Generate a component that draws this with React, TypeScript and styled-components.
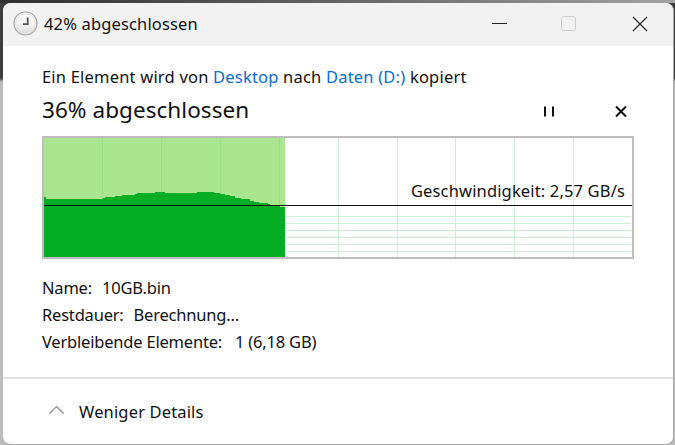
import React from 'react';
import styled, { createGlobalStyle } from 'styled-components';

const GlobalStyle = createGlobalStyle`
	html, body {
		margin: 0;
		padding: 0;
	}
	body {
		width: 675px;
		height: 445px;
		overflow: hidden;
		background:
			linear-gradient(90deg, #2e2e2e, #6a6a6a 55%, #a3a3a3) top / 100% 3px no-repeat,
			linear-gradient(180deg, #3d3d3d 0, #3d3d3d 78px, #bcbcbc 82px);
		font-family: "Noto Sans", "Open Sans", sans-serif;
		color: #111;
	}
`;

const Screen = styled.div`
	box-sizing: border-box;
	width: 675px;
	height: 445px;
	padding: 3px 1px 0 3px;
`;

const Win = styled.div`
	box-sizing: border-box;
	width: 671px;
	height: 442px;
	display: flex;
	flex-direction: column;
	background: #fff;
	border-radius: 8px;
	border-right: 1px solid #a6a6a6;
	border-bottom: 1px solid #a6a6a6;
	overflow: hidden;
`;

const TitleBar = styled.div`
	flex: 0 0 43px;
	box-sizing: border-box;
	display: flex;
	align-items: center;
	padding: 0 0 2px 10px;
	background: #f2f2f2;
`;

const TitleText = styled.div`
	flex: 1;
	margin-left: 6px;
	font-size: 16.5px;
	letter-spacing: 0.15px;
	line-height: 20px;
`;

const WinButtons = styled.div`
	display: flex;
	align-items: center;
	gap: 54px;
	margin-right: 25px;
`;

const Body = styled.div`
	flex: 1;
	display: flex;
	flex-direction: column;
	padding: 21px 39px 0;
`;

const CopyLine = styled.div`
	font-size: 16.5px;
	line-height: 20px;
	letter-spacing: 0.2px;
`;

const Link = styled.span`
	color: #0a6ed1;
`;

const ProgressRow = styled.div`
	display: flex;
	align-items: center;
	height: 30px;
	margin-top: 7px;
`;

const Percent = styled.div`
	flex: 1;
	font-size: 22.5px;
	letter-spacing: 0.05px;
`;

const ActionButtons = styled.div`
	display: flex;
	align-items: center;
	gap: 60px;
	margin: 4px 7px 0 0;
`;

const Chart = styled.div`
	position: relative;
	box-sizing: border-box;
	width: 592px;
	height: 123px;
	margin-top: 12px;
	border: 2px solid #bdbdbd;
	background: #fff;
`;

const Speed = styled.div`
	position: absolute;
	right: 7px;
	top: 43px;
	font-size: 16.5px;
	line-height: 20px;
	letter-spacing: 0.15px;
`;

const Info = styled.div`
	display: flex;
	flex-direction: column;
	margin-top: 15px;
`;

const InfoRow = styled.div<{ $gap?: number }>`
	display: flex;
	gap: ${(p) => p.$gap ?? 10}px;
	height: 27px;
	align-items: center;
	font-size: 16.5px;
	letter-spacing: -0.2px;
`;

const Divider = styled.div`
	flex: 0 0 2px;
	background: #e3e3e3;
`;

const Footer = styled.div`
	flex: 0 0 65px;
	display: flex;
	align-items: center;
	gap: 15px;
	padding-left: 46px;
	font-size: 16.5px;
	letter-spacing: 0.15px;
`;

const ChevronBox = styled.span`
	display: flex;
	margin-bottom: 5px;
`;

const CHART_W = 588;
const CHART_H = 119;
const FILL_W = 241;
const LINE_Y = 67;

// absolute x end of each step, and y of the top of the fill, in screen pixels
const steps: [number, number][] = [
	[46, 197], [103, 199], [105, 198], [115, 197], [122, 196], [135, 195], [137, 194],
	[155, 193], [165, 192], [197, 193], [214, 192], [220, 193], [225, 194], [230, 195],
	[235, 196], [241, 198], [250, 199], [254, 201], [259, 202], [268, 203], [270, 204],
	[280, 205], [285, 207],
];

const buildFill = () => {
	const pts: string[] = [`0,${CHART_H}`];
	let x = 0;
	steps.forEach(([endX, y]) => {
		const top = y - 138;
		pts.push(`${x},${top}`);
		x = endX - 44;
		pts.push(`${x},${top}`);
	});
	pts.push(`${x},${CHART_H}`);
	return pts.join(' ');
};

const verticals = [58, 117, 176, 235, 294, 353, 411, 470, 529];
const horizontals = [78.5, 85.5, 92.5, 99.5, 106.5, 113.5];

const SpeedChart = () => (
	<svg width={CHART_W} height={CHART_H} viewBox={`0 0 ${CHART_W} ${CHART_H}`} style={{ display: 'block' }}>
		{verticals.filter((x) => x > FILL_W).map((x) => (
			<line key={x} x1={x + 0.5} x2={x + 0.5} y1={0} y2={CHART_H} stroke="#cdf0d2" />
		))}
		{horizontals.map((y) => (
			<line key={y} x1={FILL_W} x2={CHART_W - 1} y1={y} y2={y} stroke="#cdf0d2" />
		))}
		<rect x={0} y={0} width={FILL_W} height={CHART_H} fill="#aae690" />
		{verticals.filter((x) => x < FILL_W).map((x) => (
			<line key={x} x1={x + 0.5} x2={x + 0.5} y1={0} y2={CHART_H} stroke="#9cdc84" />
		))}
		<polygon points={buildFill()} fill="#06ae26" shapeRendering="crispEdges" />
		<line x1={0} x2={CHART_W} y1={LINE_Y + 0.5} y2={LINE_Y + 0.5} stroke="#111" />
	</svg>
);

const ClockIcon = () => (
	<svg width="25" height="25" viewBox="0 0 25 25">
		<defs>
			<linearGradient id="clockFace" x1="0" y1="0" x2="0" y2="1">
				<stop offset="0" stopColor="#ffffff" />
				<stop offset="0.6" stopColor="#f0f0f0" />
				<stop offset="1" stopColor="#d8d8d8" />
			</linearGradient>
		</defs>
		<circle cx="12.5" cy="12.5" r="11.5" fill="url(#clockFace)" stroke="#a8a8a8" strokeWidth="1.2" />
		<circle cx="12.5" cy="12.5" r="9.8" fill="none" stroke="#e4e4e4" />
		<path d="M14.7 6.5v6.7H10" fill="none" stroke="#555" strokeWidth="1.8" />
	</svg>
);

const MinIcon = () => (
	<svg width="15" height="15" viewBox="0 0 15 15">
		<line x1="0" x2="15" y1="7.5" y2="7.5" stroke="#222" />
	</svg>
);

const MaxIcon = () => (
	<svg width="15" height="15" viewBox="0 0 15 15">
		<rect x="0.5" y="0.5" width="14" height="14" rx="2" fill="none" stroke="#cccccc" />
	</svg>
);

const CloseIcon = () => (
	<svg width="18" height="16" viewBox="-2 0 18 16">
		<path d="M1 1l14 14M15 1L1 15" stroke="#222" strokeWidth="1.1" fill="none" />
	</svg>
);

const PauseIcon = () => (
	<svg width="11" height="12" viewBox="0 0 11 12">
		<path d="M1 1.5v10M9 1.5v10" stroke="#111" strokeWidth="2" fill="none" />
	</svg>
);

const StopIcon = () => (
	<svg width="12" height="12" viewBox="0 0 12 12">
		<path d="M1 1.5l10 10M11 1.5L1 11.5" stroke="#111" strokeWidth="2" fill="none" />
	</svg>
);

const ChevronUp = () => (
	<svg width="15" height="9" viewBox="0 0 15 9">
		<path d="M0.5 8.5l7-7 7 7" stroke="#8a8a8a" strokeWidth="1.2" fill="none" />
	</svg>
);

const App: React.FC = () => (
	<>
		<GlobalStyle />
		<Screen>
			<Win>
				<TitleBar>
					<ClockIcon />
					<TitleText>42% abgeschlossen</TitleText>
					<WinButtons>
						<MinIcon />
						<MaxIcon />
						<CloseIcon />
					</WinButtons>
				</TitleBar>
				<Body>
					<CopyLine>
						Ein Element wird von <Link>Desktop</Link> nach <Link>Daten (D:)</Link> kopiert
					</CopyLine>
					<ProgressRow>
						<Percent>36% abgeschlossen</Percent>
						<ActionButtons>
							<PauseIcon />
							<StopIcon />
						</ActionButtons>
					</ProgressRow>
					<Chart>
						<SpeedChart />
						<Speed>Geschwindigkeit: 2,57 GB/s</Speed>
					</Chart>
					<Info>
						<InfoRow><span>Name:</span><span>10GB.bin</span></InfoRow>
						<InfoRow><span>Restdauer:</span><span>Berechnung...</span></InfoRow>
						<InfoRow $gap={13}><span>Verbleibende Elemente:</span><span>1 (6,18 GB)</span></InfoRow>
					</Info>
				</Body>
				<Divider />
				<Footer>
					<ChevronBox><ChevronUp /></ChevronBox>
					<span>Weniger Details</span>
				</Footer>
			</Win>
		</Screen>
	</>
);

export default App;
